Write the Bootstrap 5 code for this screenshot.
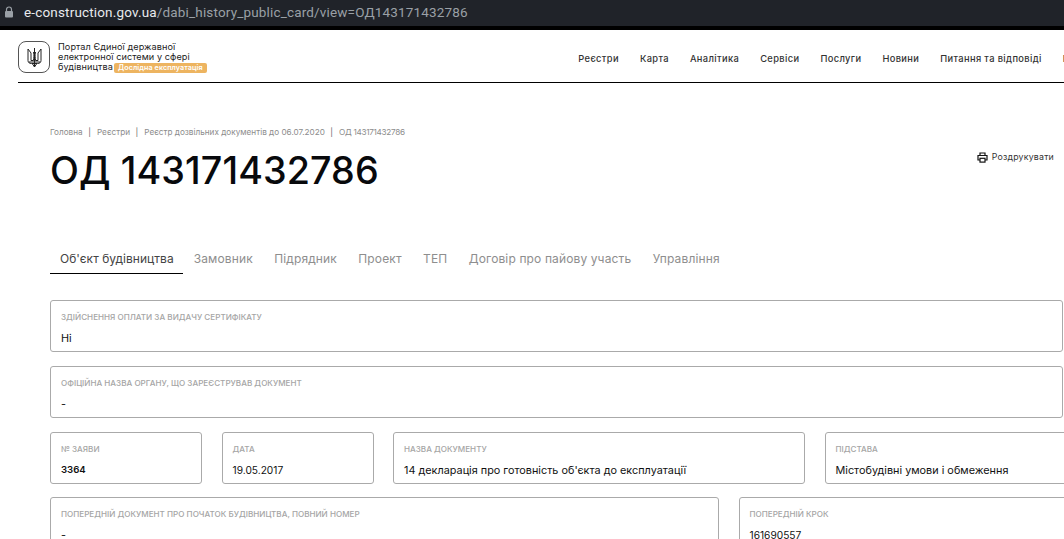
<!DOCTYPE html>
<html lang="uk">
<head>
<meta charset="utf-8">
<title>ОД 143171432786</title>
<link href="https://cdn.jsdelivr.net/npm/bootstrap@5.3.0/dist/css/bootstrap.min.css" rel="stylesheet">
<style>
html,body{height:539px;overflow:hidden;background:#fff}
body{font-family:Inter,"Liberation Sans",sans-serif;color:#111}
.urlbar{height:26px;background:#202329;color:#9aa0a6;font:13.5px/24px Roboto,"Liberation Sans",sans-serif;padding-left:4px;letter-spacing:.165px}
.urlbar b{font-weight:400;color:#e8eaed}
.urlbar svg{margin-right:10px;vertical-align:-1px}
.urledge{height:4px;background:#000}
.sitehead{height:53px;margin-left:18px;border-bottom:1px solid #000;padding-top:11px}
.logobox{width:32px;height:32px;border:1px solid #555;border-radius:8px;flex:none}
.portal{font-size:9.15px;line-height:10.3px;color:#222;margin:.5px 0 0 8px;white-space:nowrap;letter-spacing:.07px}
.trial{background:#edb460;color:#fff;font-size:7.2px;font-weight:600;border-radius:2px;padding:1px 4.5px;margin-left:-2px;display:inline-block;line-height:8px}
.mainnav{gap:21px;font-size:9.3px;font-weight:500;color:#333;letter-spacing:.375px;margin:11px -51px 0 auto;white-space:nowrap;flex:none}
.content{padding:0 0 0 50px}
.crumbs{margin-top:44px;height:10px;font-size:8.2px;line-height:10px;color:#8c8c8c;white-space:nowrap}
.crumbs i{font-style:normal;margin:0 6px 0 5.5px;color:#666}
.crumbs em{font-style:normal;letter-spacing:-.3px}
.headline{font-size:37.7px;font-weight:500;line-height:46px;color:#08090c;margin:10px 0 0;letter-spacing:.1px}
.printlink{position:absolute;top:151px;right:10px;font-size:8.8px;line-height:12px;color:#333;letter-spacing:.2px}
.tabline{margin-top:50px;height:31px;font-size:12px;letter-spacing:.13px;color:#8e8e8e}
.tabline span{padding:7px 10.7px 0;white-space:nowrap}
.tabline span.on{color:#444;border-bottom:1px solid #000;height:31px;width:133px;padding-left:10px;letter-spacing:.03px}
.fieldbox{height:52px;border:1px solid #aaa;border-radius:3px;padding:11px 10px 0;overflow:hidden;flex:none}
.fieldbox h6{font-size:8.1px;font-weight:500;line-height:10px;margin:0;color:#a5a5a5;text-transform:uppercase;white-space:nowrap}
.fieldbox p{font-size:10.85px;line-height:12px;margin:10px 0 0;color:#111;white-space:nowrap}
.fieldbox p.digits{font-size:10.2px}
.fieldbox p.appno{font-size:9.6px;font-weight:600}
.fieldstack{margin-top:26.4px;margin-right:1px;gap:13.67px;display:flex;flex-direction:column}
.fieldrow{display:flex;gap:19.5px;margin-right:-1px}
.boxnarrow{width:152px}.boxdoc{width:412px}.boxbasis{width:260px}.boxprev{width:669px}.boxstep{width:345px}
</style>
</head>
<body class="position-relative">
<div class="urlbar"><svg width="10" height="12" viewBox="0 0 10 12"><path d="M2.500 5V3.500a2.500 2.500 0 0 1 5 0V5" fill="none" stroke="#9aa0a6" stroke-width="1.2"/><rect x="1" y="5" width="8" height="6.500" rx="1" fill="#9aa0a6"/></svg><b>e-construction.gov.ua</b>/dabi_history_public_card/view=ОД143171432786</div>
<div class="urledge"></div>
<header class="sitehead d-flex">
  <div class="d-flex">
    <div class="logobox d-flex align-items-center justify-content-center">
      <svg width="15" height="21" viewBox="0 0 15 21" fill="none" stroke="#222" stroke-width="1"><path d="M7.500 1v19M7.500 20l-2-3M7.500 20l2-3M1 2v11.500c0 1.800 1.300 3 3.500 3h6c2.200 0 3.500-1.200 3.500-3V2L11 6v7.500M1 2l3 4v7.500M4 13.500h2.500c0-3 1-4 0-8.500M11 13.500H8.500c0-3-1-4 0-8.500M1.500 15h12"/></svg>
    </div>
    <div class="portal">Портал Єдиної державної<br>електронної системи у сфері<br>будівництва <span class="trial">Дослідна експлуатація</span></div>
  </div>
  <nav class="mainnav d-flex"><span>Реєстри</span><span>Карта</span><span>Аналітика</span><span>Сервіси</span><span>Послуги</span><span>Новини</span><span>Питання та відповіді</span><span>Підтримка</span></nav>
</header>
<main class="content">
  <div class="crumbs">Головна<i>|</i>Реєстри<i>|</i>Реєстр дозвільних документів до 06.07.2020<i>|</i><em>ОД 143171432786</em></div>
  <h1 class="headline">ОД 143171432786</h1>
  <div class="printlink d-flex align-items-center">
    <svg width="11" height="11" viewBox="0 0 11 11" fill="none" stroke="#111" stroke-width="1.2"><path d="M3 3.500V1h5v2.500M3 8H1V3.500h9V8H8"/><rect x="3" y="6.300" width="5" height="3.800"/></svg>
    <span class="ms-1">Роздрукувати</span>
  </div>
  <div class="tabline d-flex">
    <span class="on">Об'єкт будівництва</span><span>Замовник</span><span>Підрядник</span><span>Проект</span><span>ТЕП</span><span>Договір про пайову участь</span><span>Управління</span>
  </div>
  <div class="fieldstack">
    <div class="fieldbox"><h6>Здійснення оплати за видачу сертифікату</h6><p>Ні</p></div>
    <div class="fieldbox"><h6>Офіційна назва органу, що зареєстрував документ</h6><p>-</p></div>
    <div class="fieldrow">
      <div class="fieldbox boxnarrow"><h6>№ заяви</h6><p class="appno">3364</p></div>
      <div class="fieldbox boxnarrow"><h6>Дата</h6><p class="digits">19.05.2017</p></div>
      <div class="fieldbox boxdoc"><h6>Назва документу</h6><p>14 декларація про готовність об'єкта до експлуатації</p></div>
      <div class="fieldbox boxbasis"><h6>Підстава</h6><p>Містобудівні умови і обмеження</p></div>
    </div>
    <div class="fieldrow">
      <div class="fieldbox boxprev"><h6>Попередній документ про початок будівництва, повний номер</h6><p>-</p></div>
      <div class="fieldbox boxstep"><h6>Попередній крок</h6><p class="digits">161690557</p></div>
    </div>
  </div>
</main>
<script src="https://cdn.jsdelivr.net/npm/bootstrap@5.3.0/dist/js/bootstrap.bundle.min.js"></script>
</body>
</html>
